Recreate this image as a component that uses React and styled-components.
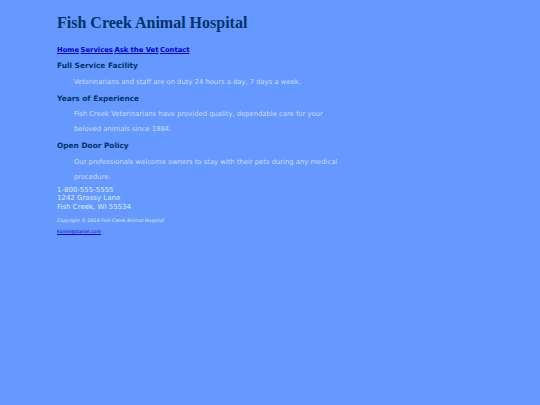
import React from "react";
import styled, { createGlobalStyle } from "styled-components";

const GlobalStyle = createGlobalStyle`
  html, body {
    margin: 0;
    padding: 0;
    background-color: #6699ff;
  }
  body {
    font-family: "DejaVu Sans", Verdana, sans-serif;
  }
`;

const sections = [
  {
    title: "Full Service Facility",
    text: "Veterinarians and staff are on duty 24 hours a day, 7 days a week.",
  },
  {
    title: "Years of Experience",
    text: "Fish Creek Veterinarians have provided quality, dependable care for your beloved animals since 1984.",
  },
  {
    title: "Open Door Policy",
    text: "Our professionals welcome owners to stay with their pets during any medical procedure.",
  },
];

const App = () => {
  return (
    <Wrapper>
      <GlobalStyle />
      <Title>Fish Creek Animal Hospital</Title>
      <Nav>
        <NavLink href="#">Home</NavLink>
        <NavLink href="#">Services</NavLink>
        <NavLink href="#">Ask the Vet</NavLink>
        <NavLink href="#">Contact</NavLink>
      </Nav>
      {sections.map((s) => (
        <Section key={s.title}>
          <SectionTitle>{s.title}</SectionTitle>
          <Para>{s.text}</Para>
        </Section>
      ))}
      <Contact>
        1-800-555-5555
        <br />
        1242 Grassy Lane
        <br />
        Fish Creek, WI 55534
      </Contact>
      <Copyright>Copyright © 2014 Fish Creek Animal Hospital</Copyright>
      <Email href="#">kamel@daniel.com</Email>
    </Wrapper>
  );
};

export default App;

const Wrapper = styled.div`
  min-height: 405px;
  padding: 14px 0 0 57px;
  box-sizing: border-box;
  width: 342px;
`;

const Title = styled.h1`
  margin: 0 0 14px;
  font-family: "Liberation Serif", "Times New Roman", serif;
  font-size: 16px;
  font-weight: 700;
  color: #003366;
`;

const Nav = styled.div`
  display: flex;
  gap: 1.5px;
  margin-bottom: 4px;
`;

const NavLink = styled.a`
  font-size: 6.8px;
  font-weight: 700;
  color: #0000cc;
  text-decoration: underline;
`;

const Section = styled.div`
  margin-bottom: 1px;
`;

const SectionTitle = styled.h2`
  margin: 0;
  font-size: 7.4px;
  font-weight: 700;
  color: #003366;
  line-height: 16px;
`;

const Para = styled.p`
  margin: 0;
  padding: 0.5px 0 0 17px;
  font-size: 6.8px;
  line-height: 15px;
  color: #ccddff;
`;

const Contact = styled.div`
  margin-top: 0;
  font-size: 7px;
  line-height: 8.5px;
  color: #ddeeff;
`;

const Copyright = styled.div`
  margin-top: 7px;
  font-size: 4.7px;
  line-height: 6px;
  font-style: italic;
  color: #ddeeff;
`;

const Email = styled.a`
  display: block;
  margin-top: 5px;
  font-size: 4.6px;
  line-height: 6px;
  color: #0000cc;
`;
